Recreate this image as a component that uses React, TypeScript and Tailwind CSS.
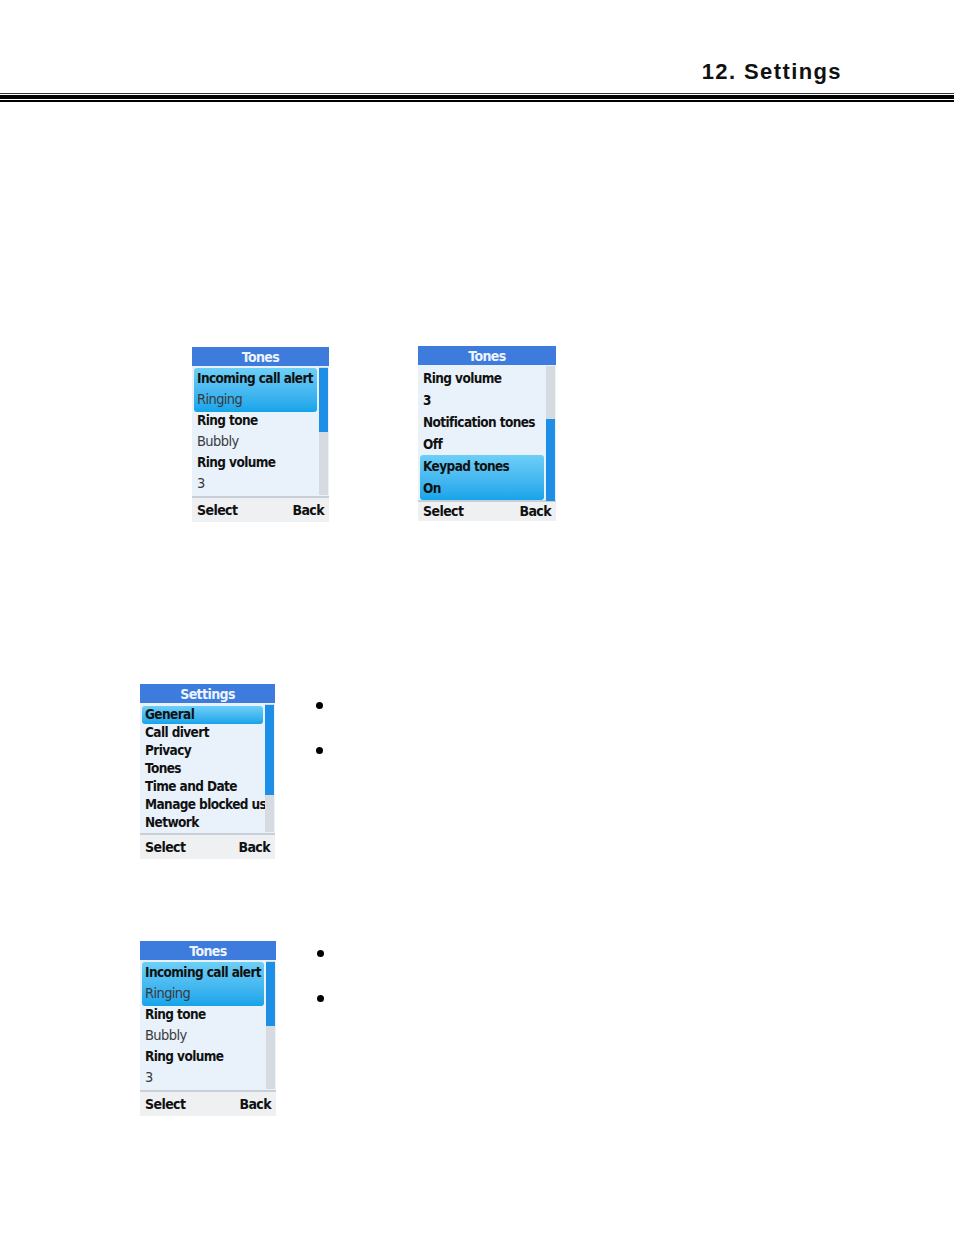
import React from 'react';

type Row = { text: string; bold?: boolean };

interface PhoneProps {
  title: string;
  rows: Row[];
  rowH: number;
  bodyH: number;
  thumbTop: number;
  thumbH: number;
  width: number;
  hiTop: number;
  hiH: number;
  footH?: number;
}

const font = { fontFamily: '"DejaVu Sans Condensed", "DejaVu Sans", sans-serif' };

function Phone({ title, rows, rowH, bodyH, thumbTop, thumbH, width, hiTop, hiH, footH = 24 }: PhoneProps) {
  return (
    <div className="flex flex-col bg-[#e9f1fb]" style={{ width, ...font }}>
      <div className="flex h-[19px] items-center justify-center bg-[#3d7cdc] text-[14px] font-bold leading-none tracking-[-0.6px] text-[#eef4ff]">
        {title}
      </div>
      <div className="relative flex" style={{ height: bodyH }}>
        <div className="relative flex-1 overflow-hidden pt-[2px]">
          <div
            className="absolute left-[2px] right-[2px] rounded-[3px] bg-gradient-to-b from-[#6ccff7] to-[#12a4ea]"
            style={{ top: hiTop, height: hiH }}
          />
          {rows.map((r, i) => (
            <div
              key={i}
              className={`relative flex items-center whitespace-nowrap pl-[5px] tracking-[-0.6px] ${
                r.bold ? 'text-[13.5px] font-bold text-[#111]' : 'text-[14.5px] text-[#3a3a3a]'
              }`}
              style={{ height: rowH }}
            >
              {r.text}
            </div>
          ))}
        </div>
        <div className="relative my-[1px] mr-[1px] w-[9px] bg-[#d6dbe2]">
          <div className="absolute left-0 right-0 bg-[#1d8fe6]" style={{ top: thumbTop, height: thumbH }} />
        </div>
      </div>
      <div className="h-[2px] bg-[#c9cfd8]" />
      <div
        className="flex items-center justify-between bg-[#eef0f2] px-[5px] text-[14px] font-bold tracking-[-0.6px] text-[#111]"
        style={{ height: footH }}
      >
        <span>Select</span>
        <span>Back</span>
      </div>
    </div>
  );
}

function Bullet() {
  return <div className="h-[7px] w-[7px] rounded-full bg-black" />;
}

const toneRows: Row[] = [
  { text: 'Incoming call alert', bold: true },
  { text: 'Ringing' },
  { text: 'Ring tone', bold: true },
  { text: 'Bubbly' },
  { text: 'Ring volume', bold: true },
  { text: '3' },
];

export default function App() {
  return (
    <div className="flex h-[1235px] w-[954px] flex-col bg-white">
      <div className="flex h-[93px] items-end justify-end pb-[10px] pr-[112px]">
        <span
          className="text-[22px] font-bold leading-none tracking-[1.4px] text-[#111]"
          style={{ fontFamily: '"Liberation Sans", Arial, sans-serif' }}
        >
          12. Settings
        </span>
      </div>
      <div className="flex flex-col">
        <div className="h-[1px] bg-[#333]" />
        <div className="h-[1px]" />
        <div className="h-[4px] bg-black" />
        <div className="h-[1px]" />
        <div className="h-[2px] bg-black" />
      </div>

      <div className="mt-[245px] flex items-start">
        <div className="ml-[192px]">
          <Phone title="Tones" rows={toneRows} rowH={21} bodyH={130} thumbTop={1} thumbH={64} width={137} hiTop={2} hiH={44} />
        </div>
        <div className="ml-[89px] -mt-[1px]">
          <Phone
            title="Tones"
            rows={[
              { text: 'Ring volume', bold: true },
              { text: '3', bold: true },
              { text: 'Notification tones', bold: true },
              { text: 'Off', bold: true },
              { text: 'Keypad tones', bold: true },
              { text: 'On', bold: true },
            ]}
            rowH={22}
            bodyH={135}
            thumbTop={53}
            thumbH={82}
            width={138}
            hiTop={90}
            hiH={45}
            footH={19}
          />
        </div>
      </div>

      <div className="mt-[162px] flex items-start">
        <div className="ml-[140px]">
          <Phone
            title="Settings"
            rows={[
              { text: 'General', bold: true },
              { text: 'Call divert', bold: true },
              { text: 'Privacy', bold: true },
              { text: 'Tones', bold: true },
              { text: 'Time and Date', bold: true },
              { text: 'Manage blocked users', bold: true },
              { text: 'Network', bold: true },
            ]}
            rowH={18}
            bodyH={130}
            thumbTop={1}
            thumbH={90}
            width={135}
            hiTop={3}
            hiH={18}
          />
        </div>
        <div className="ml-[41px] mt-[18px] flex flex-col gap-[38px]">
          <Bullet />
          <Bullet />
        </div>
      </div>

      <div className="mt-[82px] flex items-start">
        <div className="ml-[140px]">
          <Phone title="Tones" rows={toneRows} rowH={21} bodyH={130} thumbTop={1} thumbH={64} width={136} hiTop={2} hiH={44} />
        </div>
        <div className="ml-[41px] mt-[9px] flex flex-col gap-[38px]">
          <Bullet />
          <Bullet />
        </div>
      </div>
    </div>
  );
}
